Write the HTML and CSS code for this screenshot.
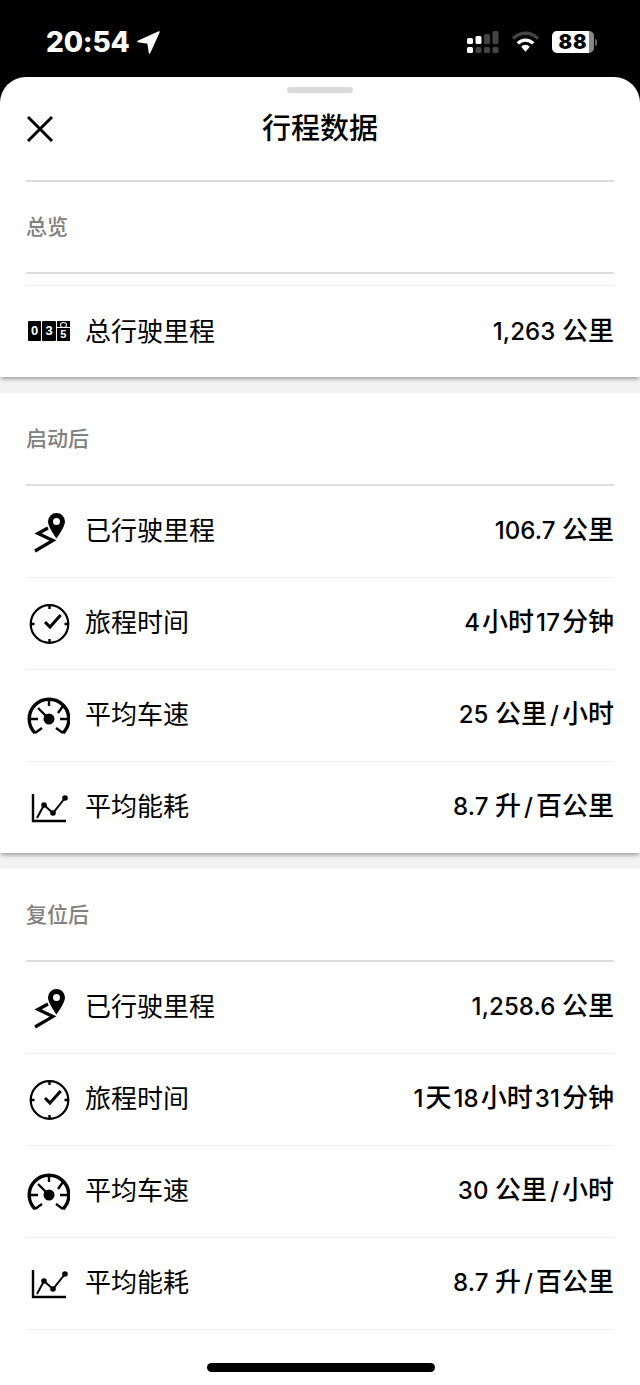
FILE: index.html
```html
<!DOCTYPE html>
<html lang="zh-CN">

<head>
    <meta charset="UTF-8">
    <meta name="viewport" content="width=device-width, initial-scale=1.0">
    <title>行程数据</title>
    <link rel="stylesheet" href="styles.css">
</head>

<body>

    <svg class="defs" width="0" height="0">
        <symbol id="icon-route" viewBox="0 0 44 44">
            <path d="M30.500 3a8.500 8.500 0 0 0-8.500 8.500c0 5.500 8.500 17 8.500 17s8.500-11.500 8.500-17a8.500 8.500 0 0 0-8.500-8.500zm0 12a3.500 3.500 0 1 1 0-7 3.500 3.500 0 0 1 0 7z" fill="#000" fill-rule="evenodd" />
            <path d="M22 18 L12 23.500 L27 30.500 L9 41" fill="none" stroke="#000" stroke-width="3.200" />
        </symbol>
        <symbol id="icon-clock" viewBox="0 0 44 44">
            <circle cx="23.500" cy="22" r="18.800" fill="none" stroke="#000" stroke-width="2.200" />
            <path d="M23.500 3v4M23.500 37v4M4.500 22h4M38.500 22h4" stroke="#000" stroke-width="2.400" />
            <path d="M19 20l5 5 10.700-12" fill="none" stroke="#000" stroke-width="3" />
        </symbol>
        <symbol id="icon-speed" viewBox="0 0 44 44">
            <path d="M9 39A19.800 19.800 0 1 1 37 39" fill="none" stroke="#000" stroke-width="3.400" />
            <path d="M23 5v7M37 12l-5 7M44 25H34M2 25h10M12 14l11 11M9 39l7-5M37 39l-7-5" stroke="#000" stroke-width="2.400" />
            <circle cx="23" cy="25" r="5.500" fill="#000" />
        </symbol>
        <symbol id="icon-chart" viewBox="0 0 44 44">
            <path d="M7 8v27h33" fill="none" stroke="#000" stroke-width="2.400" />
            <path d="M11 32l7-13 9 8 12-15" fill="none" stroke="#000" stroke-width="2" />
            <circle cx="18" cy="19" r="2.800" fill="#000" />
            <circle cx="27" cy="27" r="2.800" fill="#000" />
            <circle cx="39" cy="12" r="2.800" fill="#000" />
        </symbol>
    </svg>

    <div class="status-bar">
        <div class="status-left">
            <span class="clock">20:54</span>
            <svg class="location" width="23" height="23" viewBox="0 0 23 23">
                <path d="M22 1L1 10.500l10 1.500 1.500 10z" fill="#fff" stroke="#fff" stroke-width="1.500" stroke-linejoin="round" />
            </svg>
        </div>
        <div class="status-right">
            <svg width="32" height="22" viewBox="0 0 32 22">
                <g fill="#fff">
                    <rect x="0" y="7" width="6" height="6" rx="1.500" />
                    <rect x="8.500" y="5" width="6" height="8" rx="1.500" />
                    <rect x="0" y="16" width="6" height="6" rx="1.500" />
                </g>
                <g fill="#444">
                    <rect x="17" y="3" width="6" height="10" rx="1.500" />
                    <rect x="25.500" y="0" width="6" height="13" rx="1.500" />
                    <rect x="8.500" y="16" width="6" height="6" rx="1.500" />
                    <rect x="17" y="16" width="6" height="6" rx="1.500" />
                    <rect x="25.500" y="16" width="6" height="6" rx="1.500" />
                </g>
            </svg>
            <svg width="27" height="22" viewBox="0 0 28 22">
                <path d="M1 7.500a18 18 0 0 1 26 0" fill="none" stroke="#444" stroke-width="3.500" />
                <path d="M6 12.500a11 11 0 0 1 16 0" fill="none" stroke="#fff" stroke-width="3.500" />
                <path d="M14 21l-4.500-5a6 6 0 0 1 9 0z" fill="#fff" />
            </svg>
            <div class="battery">
                <div class="battery-body">88</div>
                <div class="battery-tip"></div>
            </div>
        </div>
    </div>

    <div class="sheet">
        <div class="handle"></div>
        <div class="sheet-header">
            <svg class="close" width="28" height="28" viewBox="0 0 28 28">
                <path d="M2 2l24 24M26 2L2 26" stroke="#000" stroke-width="3" />
            </svg>
            <h1>行程数据</h1>
        </div>

        <section class="group group-first">
            <h2>总览</h2>
            <div class="row row-first">
                <div class="row-label">
                    <div class="counter">
                        <span>0</span><span>3</span>
                        <span class="counter-roll"><i></i><i>5</i></span>
                    </div>
                    总行驶里程
                </div>
                <div class="row-value"><span class="num">1,263 </span>公里</div>
            </div>
        </section>

        <section class="group group-middle">
            <h2>启动后</h2>
            <div class="row">
                <div class="row-label"><svg class="icon"><use href="#icon-route" /></svg>已行驶里程</div>
                <div class="row-value"><span class="num">106.7 </span>公里</div>
            </div>
            <div class="row">
                <div class="row-label"><svg class="icon"><use href="#icon-clock" /></svg>旅程时间</div>
                <div class="row-value"><span class="num num-time">4</span>小时<span class="num num-time">17</span>分钟</div>
            </div>
            <div class="row">
                <div class="row-label"><svg class="icon"><use href="#icon-speed" /></svg>平均车速</div>
                <div class="row-value"><span class="num">25 </span>公里<span class="num slash">/</span>小时</div>
            </div>
            <div class="row">
                <div class="row-label"><svg class="icon"><use href="#icon-chart" /></svg>平均能耗</div>
                <div class="row-value"><span class="num">8.7 </span>升<span class="num slash">/</span>百公里</div>
            </div>
        </section>

        <section class="group group-last">
            <h2>复位后</h2>
            <div class="row">
                <div class="row-label"><svg class="icon"><use href="#icon-route" /></svg>已行驶里程</div>
                <div class="row-value"><span class="num">1,258.6 </span>公里</div>
            </div>
            <div class="row">
                <div class="row-label"><svg class="icon"><use href="#icon-clock" /></svg>旅程时间</div>
                <div class="row-value"><span class="num num-time">1</span>天<span class="num num-time">18</span>小时<span class="num num-time">31</span>分钟</div>
            </div>
            <div class="row">
                <div class="row-label"><svg class="icon"><use href="#icon-speed" /></svg>平均车速</div>
                <div class="row-value"><span class="num">30 </span>公里<span class="num slash">/</span>小时</div>
            </div>
            <div class="row">
                <div class="row-label"><svg class="icon"><use href="#icon-chart" /></svg>平均能耗</div>
                <div class="row-value"><span class="num">8.7 </span>升<span class="num slash">/</span>百公里</div>
            </div>
        </section>

        <div class="home-bar"></div>
    </div>

</body>

</html>
```

FILE: styles.css
```css
* {
    box-sizing: border-box;
}

body {
    margin: 0;
    height: 1385px;
    overflow: hidden;
    background: #000;
    font-family: "Noto Sans CJK SC", "Noto Sans", sans-serif;
    color: #000;
}

.defs {
    display: block;
    height: 0;
}

.status-bar {
    height: 77px;
    padding: 7px 43px 0 46px;
    display: flex;
    justify-content: space-between;
    align-items: center;
    color: #fff;
}

.status-left {
    display: flex;
    align-items: center;
    gap: 7px;
}

.clock {
    font-family: Inter, sans-serif;
    font-size: 28px;
    font-weight: 800;
    line-height: 1;
    letter-spacing: -0.2px;
}

.location {
    display: block;
}

.status-right {
    display: flex;
    align-items: center;
    gap: 13px;
}

.status-right svg {
    display: block;
}

.battery {
    display: flex;
    align-items: center;
    gap: 1px;
}

.battery-body {
    width: 42px;
    height: 22px;
    border-radius: 5px;
    background: linear-gradient(90deg, #fff 88%, #888 88%);
    color: #000;
    font-family: Inter, sans-serif;
    font-size: 20px;
    font-weight: 900;
    line-height: 22px;
    letter-spacing: 1px;
    text-align: center;
}

.battery-tip {
    width: 2px;
    height: 7px;
    border-radius: 0 2px 2px 0;
    background: #666;
}

.sheet {
    height: 1308px;
    background: #fff;
    border-radius: 26px 26px 0 0;
    position: relative;
    padding-top: 10px;
}

.handle {
    width: 66px;
    height: 6px;
    margin: 0 auto;
    border-radius: 3px;
    background: #d9d9d9;
}

.sheet-header {
    height: 89px;
    margin: 0 26px;
    padding-bottom: 20px;
    display: flex;
    align-items: center;
    justify-content: center;
    border-bottom: 2px solid #ddd;
    position: relative;
}

.close {
    position: absolute;
    left: 0;
    top: 22px;
}

h1 {
    margin: 0;
    font-size: 29px;
    font-weight: 500;
    line-height: 1;
}

.group {
    padding: 0 26px;
    background: #fff;
    position: relative;
}

.group-first {
    z-index: 2;
    box-shadow: 0 3px 4px -1px rgba(0, 0, 0, 0.35);
}

.group-middle {
    z-index: 1;
    border-top: 16px solid #f2f2f2;
    box-shadow: 0 3px 4px -1px rgba(0, 0, 0, 0.35);
}

.group-last {
    border-top: 16px solid #f2f2f2;
}

h2 {
    margin: 0;
    height: 93px;
    padding-bottom: 3px;
    display: flex;
    align-items: center;
    border-bottom: 2px solid #ddd;
    font-size: 21px;
    font-weight: 500;
    color: #808080;
}

.group-first h2 {
    height: 92px;
    padding-bottom: 5px;
}

.row {
    height: 92px;
    padding-bottom: 6px;
    display: flex;
    justify-content: space-between;
    align-items: center;
    border-bottom: 1px solid #eee;
}

.group-middle .row:last-child {
    height: 91px;
    border-bottom: 0;
}

.group .row-first {
    height: 103px;
    padding: 11px 0 3px;
    border-bottom: 0;
    position: relative;
}

.row-first::before {
    content: "";
    position: absolute;
    left: 0;
    right: 0;
    top: 11px;
    height: 1px;
    background: #eee;
}

.row-label {
    display: flex;
    align-items: center;
    font-size: 26px;
    line-height: 1;
}

.icon {
    width: 44px;
    height: 44px;
    margin: 6px 15px 0 0;
    flex: none;
}

.counter {
    width: 42px;
    height: 20px;
    margin: 2px 15px 0 2px;
    display: flex;
    gap: 1px;
}

.counter span {
    flex: 1;
    border-radius: 1px;
    background: #000;
    color: #fff;
    font-family: "Liberation Sans", sans-serif;
    font-size: 13px;
    font-weight: 700;
    line-height: 20px;
    text-align: center;
}

.counter .counter-roll {
    display: flex;
    flex-direction: column;
    gap: 1px;
    background: none;
}

.counter-roll i {
    display: block;
    background: #000;
    font-style: normal;
}

.counter-roll i:first-child {
    height: 6px;
    padding-top: 1px;
}

.counter-roll i:first-child::before {
    content: "";
    display: block;
    width: 5px;
    height: 4px;
    margin: 0 auto;
    border: 1px solid #fff;
    border-radius: 50%;
}

.counter-roll i:last-child {
    flex: 1;
    line-height: 13px;
    font-size: 11px;
}

.row-value {
    font-size: 26px;
    font-weight: 500;
    line-height: 1;
}

.num {
    font-family: Inter, sans-serif;
    font-size: 24px;
    letter-spacing: 0.1px;
}

.num-time {
    margin: 0 2px;
}

.slash {
    margin: 0 3px;
}

.home-bar {
    position: absolute;
    left: 207px;
    bottom: 13px;
    width: 228px;
    height: 9px;
    border-radius: 5px;
    background: #000;
}
```
